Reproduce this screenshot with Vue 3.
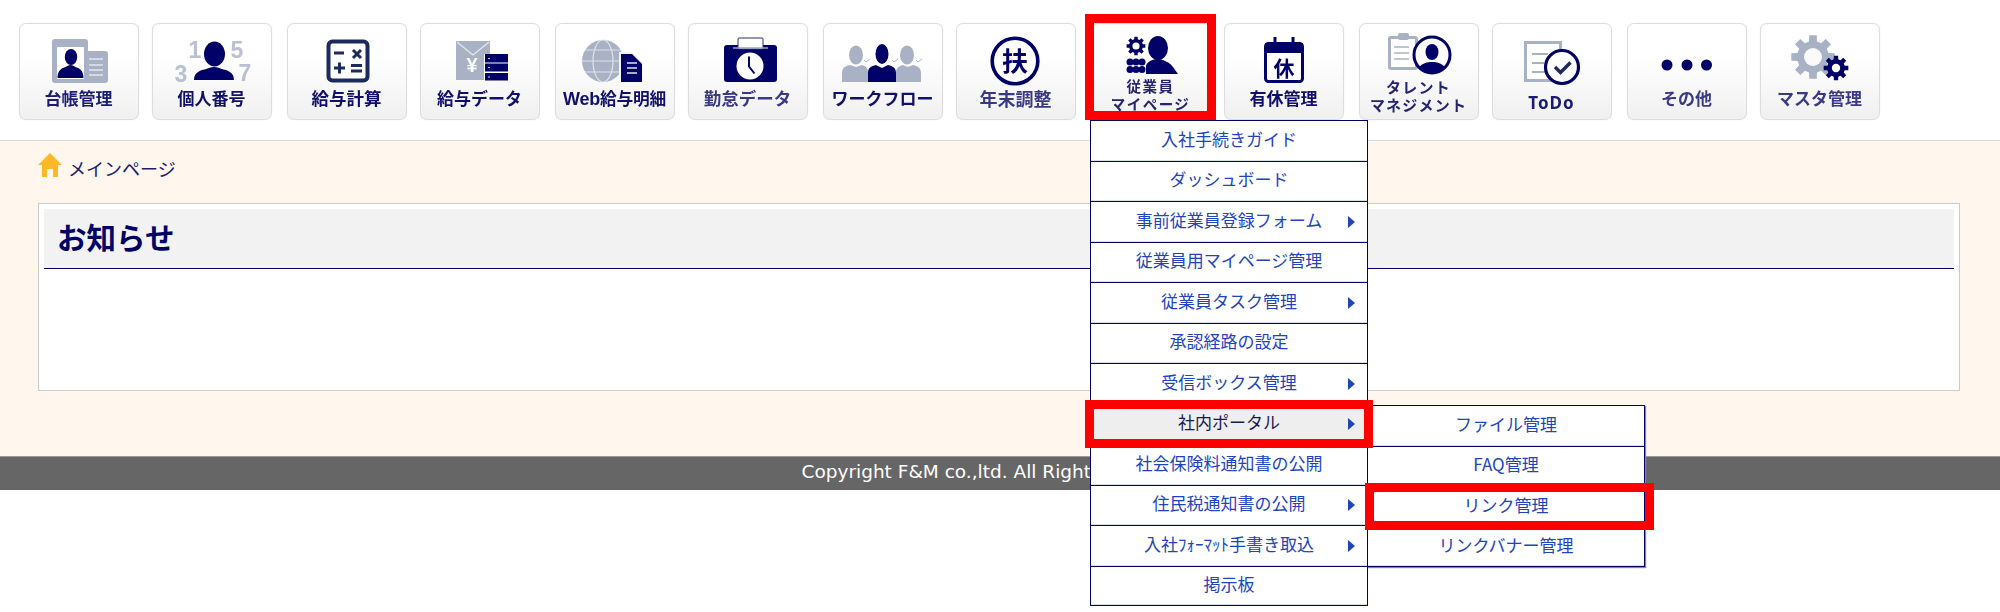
<script setup>
const menu = [
  { t: '入社手続きガイド' },
  { t: 'ダッシュボード' },
  { t: '事前従業員登録フォーム', arrow: true },
  { t: '従業員用マイページ管理' },
  { t: '従業員タスク管理', arrow: true },
  { t: '承認経路の設定' },
  { t: '受信ボックス管理', arrow: true },
  { t: '社内ポータル', arrow: true, active: true },
  { t: '社会保険料通知書の公開' },
  { t: '住民税通知書の公開', arrow: true },
  { t: '入社ﾌｫｰﾏｯﾄ手書き取込', arrow: true },
  { t: '掲示板' },
]
const sub = ['ファイル管理', 'FAQ管理', 'リンク管理', 'リンクバナー管理']

function gear(cx, cy, ro, ri, n) {
  const pts = []
  const step = (Math.PI * 2) / n
  for (let i = 0; i < n; i++) {
    const a = i * step - Math.PI / 2
    const w = step * 0.22
    const v = step * 0.32
    pts.push([ri, a - v], [ro, a - w], [ro, a + w], [ri, a + v])
  }
  return 'M' + pts.map(([r, a]) => (cx + r * Math.cos(a)).toFixed(2) + ' ' + (cy + r * Math.sin(a)).toFixed(2)).join('L') + 'Z'
}
const bust = (cx, top, bottom, hw) =>
  `M${cx - hw} ${bottom}c0-8 ${hw * 0.35}-10 ${hw * 0.62}-11c${hw * 0.12}-1 ${hw * 0.2}-2 ${hw * 0.38}-2s${hw * 0.26} 1 ${hw * 0.38} 2c${hw * 0.27} 1 ${hw * 0.62} 3 ${hw * 0.62} 11z`
</script>

<template>
  <div class="page">
    <header class="nav">
      <a class="btn">
        <svg class="ico" viewBox="19 29 120 60">
          <rect class="g" x="52" y="39" width="36" height="44" rx="3" />
          <rect class="g" x="76" y="51" width="32" height="32" rx="3" />
          <rect x="57" y="47" width="27" height="32" fill="#fff" />
          <ellipse class="n" cx="71" cy="57" rx="6.2" ry="8" />
          <path class="n" :d="bust(70.5, 64, 78, 13)" />
          <path d="M89 59h14M89 65h14M89 70h14M89 75h14" stroke="#e2e5ec" stroke-width="1.5" fill="none" />
        </svg>
        <span class="lb">台帳管理</span>
      </a>
      <a class="btn">
        <svg class="ico" viewBox="151 29 120 60">
          <text class="num" x="194" y="58">1</text>
          <text class="num" x="236" y="58">5</text>
          <text class="num" x="180" y="82">3</text>
          <text class="num" x="244" y="81">7</text>
          <ellipse class="n" cx="213.500" cy="54" rx="10.500" ry="12.500" />
          <path class="n" :d="bust(213, 62, 80, 20)" />
        </svg>
        <span class="lb strong">個人番号</span>
      </a>
      <a class="btn">
        <svg class="ico" viewBox="287 29 120 60">
          <rect x="328.500" y="41.500" width="39" height="39" rx="4" fill="#fff" stroke="#1c2b5c" stroke-width="4" />
          <path d="M334 53h10M353 50l8 8M361 50l-8 8M334 68h11M339.500 62.500v11M351 65.500h11M351 71h11" stroke="#1c2b5c" stroke-width="3" fill="none" />
        </svg>
        <span class="lb strong big">給与計算</span>
      </a>
      <a class="btn">
        <svg class="ico" viewBox="419 29 120 60">
          <rect class="g" x="455" y="41" width="34" height="39" />
          <path d="M456 42l16 13 16-13" stroke="#e6e8ee" stroke-width="1.200" fill="none" />
          <text x="471" y="72" text-anchor="middle" class="yen">¥</text>
          <rect x="483" y="54" width="24" height="26" fill="#fff" />
          <path class="n" d="M484 54h23v8.500h-23zM484 63.500h23v8h-23zM484 73h23v7.500h-23z" />
          <path d="M487 58.500h2M487 67.500h2M487 77h2" stroke="#c8cde0" stroke-width="1" />
        </svg>
        <span class="lb strong">給与データ</span>
      </a>
      <a class="btn">
        <svg class="ico" viewBox="555 29 120 60">
          <circle class="g" cx="603" cy="61" r="21" />
          <ellipse cx="603" cy="61" rx="10" ry="21" fill="none" stroke="#dfe2e9" stroke-width="1.200" />
          <path d="M582 61h42M585 50h36M585 72h36" stroke="#dfe2e9" stroke-width="1.200" fill="none" />
          <path d="M619 52h13l11 11v20h-24z" fill="#f4f4f6" />
          <path class="n" d="M621 54h11l10 10v18h-21z" />
          <path d="M627 63h10M627 68h10M627 73h10" stroke="#dfe2ef" stroke-width="1.600" fill="none" />
        </svg>
        <span class="lb wide"><b class="latin">Web</b>給与明細</span>
      </a>
      <a class="btn">
        <svg class="ico" viewBox="688 29 120 60">
          <rect class="n" x="724" y="45" width="53" height="37" rx="3" />
          <rect x="738" y="38" width="25" height="11" rx="1" fill="#fff" stroke="#2a2a7a" stroke-width="1" />
          <path d="M733 48h35" stroke="#9da3c0" stroke-width="1.500" />
          <circle cx="750" cy="66" r="13.500" fill="#fff" />
          <path d="M749 56.500v10l5.500 7" stroke="#000066" stroke-width="2" fill="none" />
        </svg>
        <span class="lb soft big">勤怠データ</span>
      </a>
      <a class="btn">
        <svg class="ico" viewBox="823 29 120 60">
          <ellipse class="g" cx="856" cy="55" rx="7" ry="9.500" />
          <path class="g" d="M842 82v-9c0-5 3-7 8-8l6 2 6-2c4 1 6 3 6 8v9z" />
          <ellipse class="g" cx="907" cy="55" rx="7" ry="9.500" />
          <path class="g" d="M896 82v-9c0-5 3-7 7-8l5 2 5-2c5 1 8 3 8 8v9z" />
          <ellipse class="n" cx="882" cy="54" rx="6.500" ry="10" />
          <path class="n" d="M868 82v-9c0-5 3-7 8-8l6 3 6-3c5 1 8 3 8 8v9z" />
          <path d="M864 60l2 2 4-3M892 60l2 2 4-3M916 60l2 2 4-3" stroke="#a9b1c4" stroke-width="1" fill="none" />
        </svg>
        <span class="lb strong">ワークフロー</span>
      </a>
      <a class="btn">
        <svg class="ico" viewBox="956 29 120 60">
          <circle cx="1015" cy="61" r="22.800" fill="#fff" stroke="#000066" stroke-width="3.600" />
          <text x="1015" y="70.500" text-anchor="middle" class="kan">扶</text>
        </svg>
        <span class="lb soft bigger">年末調整</span>
      </a>
      <a class="btn">
        <svg class="ico" viewBox="1091 29 120 60">
          <path class="n" :d="gear(1136, 46, 9.500, 7, 8)" />
          <circle cx="1136" cy="46" r="3.600" fill="#fff" />
          <g class="n">
            <circle cx="1130" cy="62" r="3.500" />
            <circle cx="1136" cy="62" r="3.500" />
            <circle cx="1142" cy="62" r="3.500" />
            <circle cx="1130" cy="69.500" r="3.500" />
            <circle cx="1136" cy="69.500" r="3.500" />
            <circle cx="1142" cy="69.500" r="3.500" />
          </g>
          <ellipse class="n" cx="1158" cy="48" rx="10" ry="12" />
          <path class="n" d="M1146 74v-8c0-3 5-6 10-7h4c6 2 10 4 13 8l5 7z" />
        </svg>
        <span class="lb two">従業員<br />マイページ</span>
      </a>
      <a class="btn">
        <svg class="ico" viewBox="1224 29 120 60">
          <rect x="1265.500" y="43.500" width="37" height="38" rx="3" fill="#fff" stroke="#000066" stroke-width="3" />
          <rect class="n" x="1265" y="43" width="38" height="10" />
          <path d="M1275 37v8M1293 37v8" stroke="#000066" stroke-width="3" />
          <text x="1284" y="76" text-anchor="middle" class="kan small">休</text>
        </svg>
        <span class="lb strong">有休管理</span>
      </a>
      <a class="btn">
        <svg class="ico" viewBox="1358 29 120 60">
          <rect class="g" x="1387" y="36" width="30" height="34" rx="3" />
          <rect x="1390" y="39" width="24" height="28" fill="#fff" />
          <rect class="g" x="1397" y="33" width="11" height="7" rx="2" />
          <path d="M1393 47h15M1393 53h15M1393 59h15" stroke="#bfc5d3" stroke-width="1.800" fill="none" />
          <circle cx="1431" cy="55" r="18" fill="#fff" stroke="#000066" stroke-width="3" />
          <ellipse class="n" cx="1431" cy="52" rx="6.500" ry="8" />
          <path class="n" d="M1418 67c4-4 8-5 13-5s9 1 13 5c-3 4-8 6-13 6s-10-2-13-6z" />
        </svg>
        <span class="lb two tal">タレント<br />マネジメント</span>
      </a>
      <a class="btn">
        <svg class="ico" viewBox="1492 29 120 60">
          <rect x="1525.500" y="42.500" width="35" height="38" fill="#fff" stroke="#a9b1c4" stroke-width="3" />
          <path d="M1532 54h16M1532 63h12M1532 72h14" stroke="#a9b1c4" stroke-width="2" fill="none" />
          <circle cx="1562" cy="67" r="16.500" fill="#fff" stroke="#000066" stroke-width="3.200" />
          <path d="M1555 67l5.500 5.500 10-10" stroke="#1c2b5c" stroke-width="3.400" fill="none" />
        </svg>
        <span class="lb todo">ToDo</span>
      </a>
      <a class="btn">
        <svg class="ico" viewBox="1627 29 120 60">
          <circle class="n" cx="1667" cy="65" r="5.500" />
          <circle class="n" cx="1687" cy="65" r="5.500" />
          <circle class="n" cx="1706.500" cy="65" r="5.500" />
        </svg>
        <span class="lb soft">その他</span>
      </a>
      <a class="btn">
        <svg class="ico" viewBox="1760 29 120 60">
          <path class="g" :d="gear(1813, 57, 22, 16, 8)" />
          <circle cx="1813" cy="57" r="9" fill="#fafafa" />
          <path class="n" :d="gear(1836, 68, 12.500, 9, 8)" />
          <circle cx="1836" cy="68" r="4.200" fill="#fff" />
        </svg>
        <span class="lb soft">マスタ管理</span>
      </a>
    </header>

    <main class="main">
      <div class="crumb">
        <svg class="home" viewBox="0 0 24 24">
          <path d="M12 0L24 12h-4v12h-5v-8H9v8H4V12H0z" fill="#fdb827" />
        </svg>
        <span>メインページ</span>
      </div>
      <section class="card">
        <h1 class="title">お知らせ</h1>
      </section>
    </main>

    <footer class="foot">Copyright F&amp;M co.,ltd. All Rights Reserved.</footer>

    <ul class="menu">
      <li v-for="m in menu" :key="m.t" class="row" :class="{ on: m.active }">
        {{ m.t }}<i v-if="m.arrow" class="arr"></i>
      </li>
    </ul>
    <ul class="menu sub">
      <li v-for="s in sub" :key="s" class="row">{{ s }}</li>
    </ul>

    <div class="mark m1"></div>
    <div class="mark m2"></div>
    <div class="mark m3"></div>
  </div>
</template>

<style scoped>
.page {
  position: relative;
  min-height: 612px;
  font-family: "Noto Sans CJK JP", "Noto Sans", sans-serif;
  color: #000066;
}
.nav {
  display: flex;
  gap: 14px;
  padding: 23px 0 0 18.500px;
  box-sizing: border-box;
  border-bottom: 1px solid #dcdcdc;
  height: 141px;
}
.btn {
  width: 120px;
  height: 97px;
  box-sizing: border-box;
  border: 1px solid #dcdcdc;
  border-radius: 7px;
  background: linear-gradient(#ffffff 35%, #f0f0f0);
  box-shadow: 0 0 1px #ddd;
  display: flex;
  flex-direction: column;
  align-items: center;
}
.btn:nth-child(even) {
  margin: 0 1px 0 -1px;
}
.ico {
  display: block;
  width: 120px;
  height: 60px;
  margin-top: 5px;
  flex: none;
  filter: blur(0.4px);
}
.g { fill: #a9b1c4; }
.n { fill: #000066; }
.num {
  font: 700 23px "Liberation Sans", sans-serif;
  fill: #b9c0d2;
  text-anchor: middle;
}
.yen {
  font: 700 20px "Liberation Sans", sans-serif;
  fill: #fff;
}
.kan {
  font: 700 26px "Noto Sans CJK JP", sans-serif;
  fill: #000066;
}
.kan.small { font-size: 21px; }
.lb {
  display: block;
  font-size: 17px;
  line-height: 18px;
  font-weight: 700;
  color: #1c1c72;
  white-space: nowrap;
  text-align: center;
  filter: blur(0.35px);
}
.lb.strong { color: #10106a; }
.lb.soft { color: #3a3a84; }
.lb.big { font-size: 17.500px; }
.lb.bigger { font-size: 18px; }
.lb.wide { font-size: 16.700px; letter-spacing: -0.200px; color: #10106a; }
.latin { font-family: "Liberation Sans", sans-serif; font-size: 18px; }
.lb.two {
  font-size: 14.500px;
  color: #24246f;
  margin-top: -12px;
  letter-spacing: 1.500px;
}
.lb.tal { letter-spacing: 1.200px; font-size: 15px; margin-top: -11px; }
.lb.todo {
  font: 700 17px "Noto Sans", sans-serif;
  letter-spacing: 1px;
  margin-top: 2px;
}
.main {
  height: 315px;
  box-sizing: border-box;
  background: #fff7ee;
  padding: 12px 40px 0 38px;
}
.crumb {
  display: flex;
  align-items: center;
  gap: 6px;
  height: 24px;
  font-size: 18px;
  color: #1a1a6e;
}
.crumb span { padding-top: 5px; }
.home {
  width: 24px;
  height: 24px;
  flex: none;
}
.card {
  margin-top: 26px;
  height: 188px;
  box-sizing: border-box;
  border: 1px solid #cccccc;
  background: #fff;
  padding: 5px;
}
.title {
  margin: 0;
  height: 60px;
  box-sizing: border-box;
  padding-left: 13px;
  background: #f2f2f2;
  border-bottom: 1px solid #000066;
  font-size: 29.500px;
  line-height: 54px;
  font-weight: 700;
  color: #000066;
}
.foot {
  height: 34px;
  box-sizing: border-box;
  border-top: 1px solid #999;
  background: #666666;
  color: #fff;
  text-align: center;
  font: 400 18.500px/30px "DejaVu Sans", sans-serif;
}
.menu {
  position: absolute;
  left: 1090px;
  top: 120px;
  width: 278px;
  margin: 0;
  padding: 0;
  list-style: none;
  display: grid;
  grid-auto-rows: 40.500px;
  background: #fff;
  box-sizing: border-box;
  border: 1px solid #000066;
  border-top: 0;
  border-bottom: 0;
}
.menu.sub {
  left: 1367px;
  top: 405px;
  width: 278px;
  box-shadow: 1px 1px 1px #888;
}
.row {
  position: relative;
  display: flex;
  align-items: center;
  justify-content: center;
  padding-bottom: 5px;
  box-sizing: border-box;
  font-size: 17px;
  color: #2244bb;
  border-top: 1px solid #000066;
  box-shadow: inset 0 -1px 0 #dcdcec;
  background: #fff;
}
.row:last-child { border-bottom: 1px solid #000066; }
.row.on {
  background: #eeeeee;
  color: #1a1a50;
}
.arr {
  position: absolute;
  right: 12px;
  top: 50%;
  margin-top: -6px;
  border-left: 7px solid #2244bb;
  border-top: 6px solid transparent;
  border-bottom: 6px solid transparent;
}
.mark {
  position: absolute;
  box-sizing: border-box;
  border: 9px solid #ff0000;
  pointer-events: none;
}
.m1 { left: 1085px; top: 14px; width: 131px; height: 106px; }
.m2 { left: 1085px; top: 400px; width: 288px; height: 48px; }
.m3 { left: 1365px; top: 483px; width: 289px; height: 47px; }
</style>

<style>
body { margin: 0; background: #fff; }
</style>
